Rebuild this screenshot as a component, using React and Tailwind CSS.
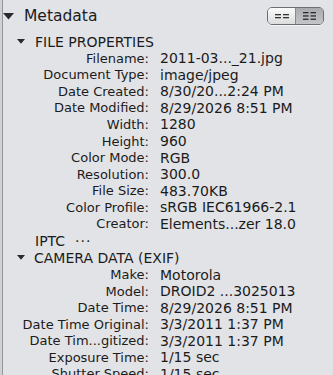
import React from 'react';

const fileProps = [
  ['Filename', '2011-03..._21.jpg'],
  ['Document Type', 'image/jpeg'],
  ['Date Created', '8/30/20...2:24 PM'],
  ['Date Modified', '8/29/2026 8:51 PM'],
  ['Width', '1280'],
  ['Height', '960'],
  ['Color Mode', 'RGB'],
  ['Resolution', '300.0'],
  ['File Size', '483.70KB'],
  ['Color Profile', 'sRGB IEC61966-2.1'],
  ['Creator', 'Elements...zer 18.0'],
];

const exif = [
  ['Make', 'Motorola'],
  ['Model', 'DROID2 ...3025013'],
  ['Date Time', '8/29/2026 8:51 PM'],
  ['Date Time Original', '3/3/2011 1:37 PM'],
  ['Date Tim...gitized', '3/3/2011 1:37 PM'],
  ['Exposure Time', '1/15 sec'],
  ['Shutter Speed', '1/15 sec'],
];

function Triangle({ big }) {
  return big ? (
    <svg width="11" height="7" viewBox="0 0 11 7" className="shrink-0">
      <polygon points="0,0 11,0 5.5,6.5" fill="#2a2a2a" />
    </svg>
  ) : (
    <svg width="8" height="5" viewBox="0 0 8 5" className="shrink-0">
      <polygon points="0,0 8,0 4,4.8" fill="#2a2a2a" />
    </svg>
  );
}

function Row({ label, value }) {
  return (
    <div className="flex h-[16.56px] items-center leading-none">
      <div className="w-[146px] shrink-0 text-right text-[13px] whitespace-nowrap">{label}:</div>
      <div className="ml-[11px] text-[14px] whitespace-nowrap">{value}</div>
    </div>
  );
}

function ViewToggle() {
  return (
    <div className="flex h-[18px] w-[57px] overflow-hidden rounded-[5px] border border-[#6e6e70] shadow-[0_1px_0_#f4f4f6]">
      <div className="flex flex-1 items-center justify-center bg-gradient-to-b from-[#fbfbfb] to-[#dcdcde] border-r border-[#8a8a8c]">
        <svg width="14" height="5" viewBox="0 0 14 5">
          <rect x="0" y="0" width="6" height="1.3" fill="#333" />
          <rect x="8" y="0" width="6" height="1.3" fill="#333" />
          <rect x="0" y="3" width="6" height="1.3" fill="#333" />
          <rect x="8" y="3" width="6" height="1.3" fill="#333" />
        </svg>
      </div>
      <div className="flex flex-1 items-center justify-center bg-gradient-to-b from-[#a9aaae] to-[#c4c5c9]">
        <svg width="13" height="8" viewBox="0 0 13 8">
          <rect x="0" y="0" width="5.5" height="1.3" fill="#2a2a2a" />
          <rect x="7.5" y="0" width="5.5" height="1.3" fill="#2a2a2a" />
          <rect x="0" y="3.3" width="5.5" height="1.3" fill="#2a2a2a" />
          <rect x="7.5" y="3.3" width="5.5" height="1.3" fill="#2a2a2a" />
          <rect x="0" y="6.6" width="5.5" height="1.3" fill="#2a2a2a" />
          <rect x="7.5" y="6.6" width="5.5" height="1.3" fill="#2a2a2a" />
        </svg>
      </div>
    </div>
  );
}

export default function App() {
  return (
    <div className="flex h-[375px] w-[333px] overflow-hidden bg-[#e2e3e7] text-[#1b1b1b] font-['DejaVu_Sans',sans-serif]">
      <div className="w-[2px] shrink-0 bg-[#d0d1d4]" />
      <div className="w-[1px] shrink-0 bg-[#96979a]" />
      <div className="flex-1">
        {/* Panel header */}
        <div className="flex h-[33px] items-center pr-[9px]">
          <Triangle big />
          <div className="ml-[10px] text-[15.5px] leading-none">Metadata</div>
          <div className="ml-auto -mt-[1px]"><ViewToggle /></div>
        </div>

        {/* File properties */}
        <div className="flex h-[17px] items-center">
          <div className="ml-[14px]"><Triangle /></div>
          <div className="ml-[10px] text-[14px] leading-none">FILE PROPERTIES</div>
        </div>
        <div>
          {fileProps.map(([l, v]) => (
            <Row key={l} label={l} value={v} />
          ))}
        </div>

        {/* IPTC */}
        <div className="flex h-[17.4px] items-center pl-[32px] text-[14px] leading-none">
          <span>IPTC</span>
          <span className="ml-[10px] tracking-[1px]">···</span>
        </div>

        {/* Camera data */}
        <div className="flex h-[17px] items-center">
          <div className="ml-[14px]"><Triangle /></div>
          <div className="ml-[9px] text-[14px] leading-none">CAMERA DATA (EXIF)</div>
        </div>
        <div>
          {exif.map(([l, v]) => (
            <Row key={l} label={l} value={v} />
          ))}
        </div>
      </div>
    </div>
  );
}
